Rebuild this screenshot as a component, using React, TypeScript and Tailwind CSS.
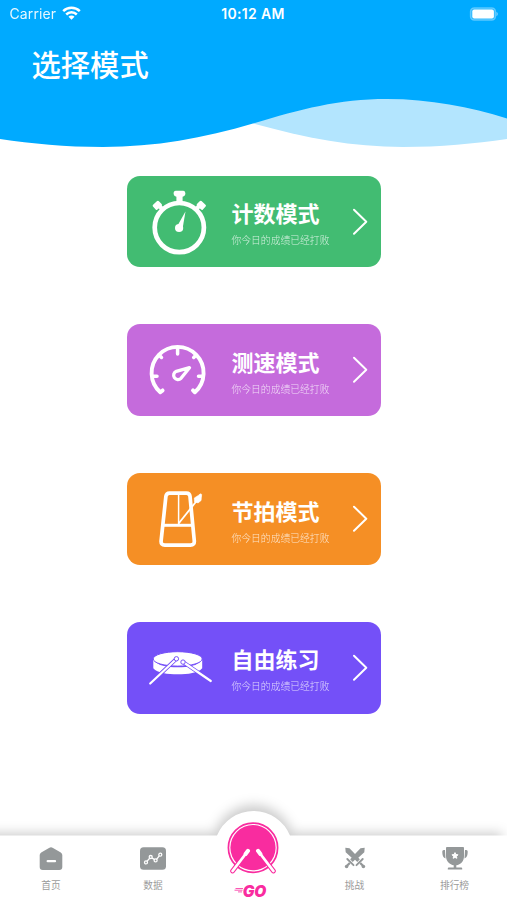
import type { ReactNode } from "react";

const cjk = "font-['Noto_Sans_CJK_SC',sans-serif]";

function StatusBar() {
  return (
    <div className="grid h-7 grid-cols-3 items-center px-[9.5px] font-['Inter',sans-serif] text-white">
      <div className="flex items-center gap-[6px]">
        <span className="text-[14px] leading-none tracking-[0.1px] opacity-90">Carrier</span>
        <svg className="-mt-[2px]" width="19" height="14" viewBox="0 0 19 14" fill="none" stroke="#fff" strokeWidth="2.500">
          <path d="M1.200 5.200a12 12 0 0 1 16.600 0" />
          <path d="M4.200 8.500a7.600 7.600 0 0 1 10.600 0" />
          <path d="M9.500 13.800 6.500 10.800a4.200 4.200 0 0 1 6 0Z" fill="#fff" stroke="none" />
        </svg>
      </div>
      <span className="-ml-px whitespace-nowrap text-center text-[14px] font-semibold leading-none tracking-[0.35px]">10:12 AM</span>
      <svg className="-mt-px justify-self-end" width="29" height="14" viewBox="0 0 29 14">
        <rect x="1.500" y="0.800" width="25" height="12.400" rx="3.600" fill="#fff" fillOpacity="0.200" stroke="#fff" strokeOpacity="0.300" strokeWidth="1.300" />
        <rect x="3.300" y="2.600" width="21.600" height="8.800" rx="2" fill="#fff" />
        <path d="M27.400 4.800q1.500.8 1.500 2.200t-1.500 2.200Z" fill="#fff" fillOpacity="0.450" />
      </svg>
    </div>
  );
}

function Header() {
  return (
    <header className="grid h-[150px] shrink-0">
      <svg className="[grid-area:1/1]" width="507" height="150" viewBox="0 0 507 150">
        <path d="M253 123.500C306 138 352 147 403 147c38 0 71-3.500 104-8V90H300Z" fill="#b3e5fe" />
        <path d="M0 0h507v118.500C470 107 430 99 387 99c-49 0-87 10.500-134 24.500C204 138 155 147 103 147 65 147 32 143.500 0 139Z" fill="#00aaff" />
      </svg>
      <div className="[grid-area:1/1]">
        <StatusBar />
        <h1 className={`${cjk} pl-[31.500px] pt-[13px] text-[29.300px] font-medium leading-[44px] text-white`}>选择模式</h1>
      </div>
    </header>
  );
}

function StopwatchIcon() {
  return (
    <g transform="translate(.8 0)">
      <circle cx="33.500" cy="51.600" r="24.600" fill="none" stroke="#fff" strokeWidth="4.700" />
      <path d="M30 14.800h7.600q2 0 2 2.700 0 2.200-1.600 2.700l-1.200.6V27h-6.200v-6.200l-1.200-.6q-1.600-.5-1.600-2.700 0-2.700 2.200-2.700Z" />
      <rect x="7.500" y="26" width="8" height="6.600" rx="1.300" transform="rotate(-42 11.500 29.300)" />
      <rect x="51.500" y="26" width="8" height="6.600" rx="1.300" transform="rotate(42 55.500 29.300)" />
      <path d="m13.500 30 4 4M53.500 30l-4 4" stroke="#fff" strokeWidth="4" />
      <circle cx="33.300" cy="52" r="4.100" />
      <path d="m39.700 35.500-2.900 17-5.300-2.500Z" />
    </g>
  );
}

function GaugeIcon() {
  return (
    <g fill="none" stroke="#fff" strokeLinecap="round" strokeLinejoin="round">
      <path d="M17.600 66.400 15.300 68.300A26 26 0 1 1 49.900 68.300L48 66.400" strokeWidth="3.900" />
      <path d="M32.600 25v5M8 52.200h4M53.500 52.200h4M14.500 31.500l2 2M50.700 31.500l-2 2" strokeWidth="3.500" />
      <path d="m44.500 43.700-13.200 3.600a4.300 4.300 0 1 0 4.700 7Z" strokeWidth="3.300" />
    </g>
  );
}

function MetronomeIcon() {
  return (
    <g fill="none" stroke="#fff" strokeLinejoin="round">
      <path d="M24.500 20.100h17q3.100 0 3.500 3.200l4.300 44.600q.3 4.200-3.800 4.200h-25.700q-4 0-3.700-4.200l4.800-44.600q.5-3.200 3.600-3.200Z" strokeWidth="3.700" />
      <path d="M18 52.300h30" strokeWidth="3" />
      <path d="M33.600 21v31" strokeWidth="1.500" />
      <path d="m33.600 50.500 22.400-28" strokeWidth="1.800" />
      <path d="m49.300 25 4.300-2.700 1.500-1.500 1.600.6-.3 2.400-.3 3.700-3 2.400-3.600-1Z" fill="#fff" strokeWidth=".6" />
    </g>
  );
}

function DrumIcon() {
  return (
    <>
      <path d="M8.300 37.700C13 44 22 45.200 32.700 45.200S52.500 44 57.200 37.700v8.600C53 51.300 43 52.300 32.700 52.300S12.500 51.300 8.300 46.300Z" />
      <ellipse cx="32.700" cy="36.900" rx="24.500" ry="7.200" stroke="#7450f8" strokeWidth="1" />
      <g fill="none" strokeLinecap="round">
        <path d="M30 38.200 5.200 61.500M39.500 41l26.300 18" stroke="#7450f8" strokeWidth="3.900" />
        <path d="M30 38.200 5.200 61.500M39.500 41l26.300 18" stroke="#fff" strokeWidth="2.200" />
      </g>
      <circle cx="31.400" cy="36.800" r="2.200" stroke="#7450f8" strokeWidth="1" />
      <circle cx="38" cy="40.100" r="2.200" stroke="#7450f8" strokeWidth="1" />
    </>
  );
}

function ModeCard({ title, color, icon }: { title: string; color: string; icon: ReactNode }) {
  return (
    <button className={`flex h-[91.700px] w-[253.400px] items-center rounded-[13px] pl-[17.700px] text-left text-white ${color}`}>
      <svg className="shrink-0" width="70" height="91.700" viewBox="0 0 70 91.700" fill="#fff">{icon}</svg>
      <span className={`${cjk} flex flex-1 flex-col pl-[16.600px] pt-[2px]`}>
        <span className="text-[22px] font-bold leading-[30px]">{title}</span>
        <span className="mt-[5px] whitespace-nowrap text-[9.800px] font-light leading-[16px] opacity-75">你今日的成绩已经打败</span>
      </span>
      <svg className="mr-[12.700px] shrink-0" width="16" height="28" viewBox="0 0 16 28" fill="none" stroke="#fff" strokeWidth="2" strokeLinecap="round" strokeLinejoin="round">
        <path d="m2 1.700 12.300 12L2 25.700" />
      </svg>
    </button>
  );
}

function Tab({ label, children }: { label: string; children: ReactNode }) {
  return (
    <button className="flex flex-col items-center pt-[56px]">
      <svg width="28" height="26" viewBox="0 0 28 26" fill="#949899">{children}</svg>
      <span className={`${cjk} mt-[6px] text-[9.700px] leading-[15px] text-[#9b9b9b]`}>{label}</span>
    </button>
  );
}

function GoButton() {
  return (
    <button className="flex flex-col items-center pt-[31px]">
      <svg className="-ml-[2px]" width="54" height="54" viewBox="0 0 54 54">
        <circle cx="27" cy="26.700" r="24.600" fill="#fff" stroke="#f92c9f" strokeWidth="1.700" />
        <circle cx="27" cy="26.700" r="22.600" fill="#f92c9f" />
        <g fill="none" strokeLinecap="round">
          <path d="M21.500 30.500 6.600 50M32.500 30.500 47.400 50" stroke="#f92c9f" strokeWidth="4.800" />
          <path d="M21.500 30.500 6.600 50M32.500 30.500 47.400 50" stroke="#fff" strokeWidth="2.800" />
          <path d="m22 29.800-2.400 3.200M32 29.800l2.400 3.200" stroke="#fff" strokeWidth="4" />
        </g>
      </svg>
      <span className="mt-[9px] flex items-start pr-[8px] leading-none text-[#f92c9f]">
        <svg className="mt-[3px]" width="9" height="8" viewBox="0 0 9 8" fill="none" stroke="#f92c9f" strokeWidth="0.800">
          <path d="M1.500 1.500H9M.5 3.200h8M4 4.900h4" />
        </svg>
        <span className="font-['Inter',sans-serif] text-[15.500px] font-black italic leading-[15px]">GO</span>
      </span>
    </button>
  );
}

function TabBar() {
  return (
    <footer className="grid h-[110px] shrink-0">
      <svg className="[grid-area:1/1]" width="507" height="110" viewBox="0 0 507 110">
        <defs>
          <filter id="soft" x="-40" y="0" width="580" height="150" filterUnits="userSpaceOnUse">
            <feGaussianBlur stdDeviation="6" />
          </filter>
        </defs>
        <path d="M-30 43H215A40.500 40.500 0 0 1 292 43H502V130H-30Z" fill="#000" fillOpacity="0.200" filter="url(#soft)" />
        <path d="M0 45.500H217A39.400 39.400 0 0 1 290 45.500H507V110H0Z" fill="#fff" />
      </svg>
      <nav className="grid grid-cols-[102px_102px_100px_101px_99px] pr-[3px] [grid-area:1/1]">
        <Tab label="首页">
          <path d="M14 1.200q.9 0 2 .8l7.800 4.500q1.500 1 1.500 2.500v12q0 3-3 3H5.700q-3 0-3-3V9q0-1.500 1.500-2.500L12 2q1.100-.8 2-.8Z" />
          <path d="M10.700 15.200h7.300" stroke="#fff" strokeWidth="2.300" strokeLinecap="round" />
        </Tab>
        <Tab label="数据">
          <rect x="1" y="1.200" width="26" height="22.600" rx="3.600" />
          <g fill="#949899" stroke="#fff" strokeWidth="1.300">
            <path d="m7 16.400 4.600-5.200 5.200 3.200 4.600-6" fill="none" />
            <circle cx="7" cy="16.400" r="1.500" />
            <circle cx="11.700" cy="11" r="1.500" />
            <circle cx="16.600" cy="14.400" r="1.500" />
            <circle cx="21.300" cy="8.700" r="1.500" />
          </g>
        </Tab>
        <GoButton />
        <Tab label="挑战">
          <path d="M4.300 1.800 8.500 2.200 14 8l5.500-5.800 4.200-.4-.4 4.400-6 5.500 1.600 1.600-2.600 2.600L14 13.800l-2.300 2.100-2.600-2.600 1.600-1.600-6-5.500Z" />
          <path d="m6.300 13 6.200 6.200M21.700 13l-6.200 6.200" stroke="#949899" strokeWidth="1.900" strokeLinecap="round" />
          <path d="m8.800 17-3 3M19.200 17l3 3" stroke="#949899" strokeWidth="2.300" />
          <circle cx="5.600" cy="20.500" r="1.800" />
          <circle cx="22.400" cy="20.500" r="1.800" />
        </Tab>
        <Tab label="排行榜">
          <path d="M5 1.800q0-.7 1-.7h16q1 0 1 .7v8.500c0 5-3.400 8.500-7.700 9v2.300h4.900q1 0 1 .9v1H6.800v-1q0-.9 1-.9h4.900v-2.300C9 18.800 5 15.300 5 10.300Z" />
          <path d="M4 4H2.700q-1.400 0-1.400 1.600c0 3.600.9 6.400 3.200 6.800ZM24 4h1.300q1.400 0 1.400 1.600c0 3.600-.9 6.400-3.200 6.800Z" />
          <path d="m14 6.600.9 1.900 2.100.3-1.500 1.500.3 2-1.800-.9-1.800.9.300-2L11 8.800l2.100-.3Z" fill="#fff" stroke="#fff" strokeWidth="1" />
        </Tab>
      </nav>
    </footer>
  );
}

export default function App() {
  return (
    <div className="flex h-[900px] w-[507px] flex-col overflow-hidden bg-white">
      <Header />
      <main className="flex min-h-0 flex-1 flex-col items-center gap-[57px] pl-[0.800px] pt-[25.800px]">
        <ModeCard title="计数模式" color="bg-[#42bc72]" icon={<StopwatchIcon />} />
        <ModeCard title="测速模式" color="bg-[#c56bdc]" icon={<GaugeIcon />} />
        <ModeCard title="节拍模式" color="bg-[#f58f25]" icon={<MetronomeIcon />} />
        <ModeCard title="自由练习" color="bg-[#7450f8]" icon={<DrumIcon />} />
      </main>
      <TabBar />
    </div>
  );
}
